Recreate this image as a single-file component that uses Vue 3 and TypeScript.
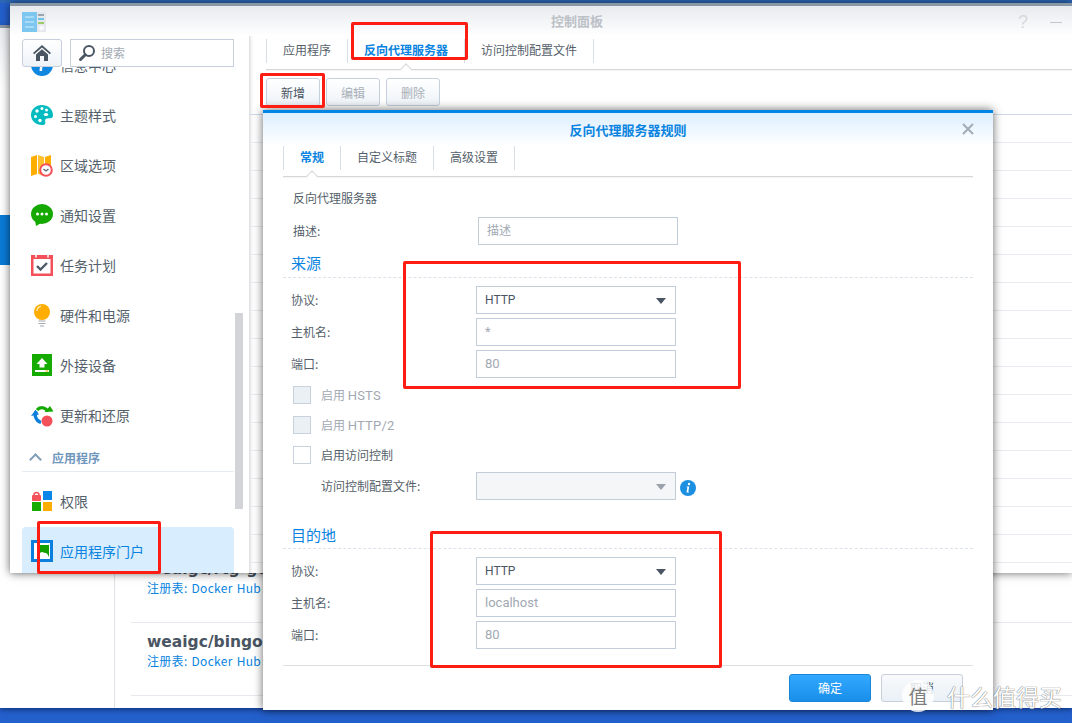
<script setup lang="ts">
const navItems = [
  { icon: 'info', label: '信息中心' },
  { icon: 'palette', label: '主题样式' },
  { icon: 'map', label: '区域选项' },
  { icon: 'chat', label: '通知设置' },
  { icon: 'calendar', label: '任务计划' },
  { icon: 'bulb', label: '硬件和电源' },
  { icon: 'external', label: '外接设备' },
  { icon: 'update', label: '更新和还原' },
]
const bgRows = Array.from({ length: 16 }, (_, i) => i)
const images = [
  { name: 'weaigc/rtg-gen', first: true },
  { name: 'weaigc/bingo', first: false },
]
</script>

<template>
  <div class="desktop">
    <!-- window behind -->
    <section class="win back">
      <div class="back-nav"><div class="back-sel"></div></div>
      <div class="back-list">
        <div v-for="im in images" :key="im.name" class="image-row">
          <div class="image-name">{{ im.name }}</div>
          <div class="image-reg">注册表: Docker Hub</div>
        </div>
        <div class="image-row short"></div>
      </div>
    </section>

    <!-- control panel -->
    <section class="win panel">
      <header class="titlebar">
        <svg class="app-icon" width="24" height="20" viewBox="0 0 24 20">
          <rect width="24" height="20" fill="#e4e8ec" />
          <rect width="15" height="20" fill="#7cc6f0" />
          <path d="M3 5h9M3 10h9M3 15h9" stroke="#d5eefb" stroke-width="1" />
          <path d="M16 3h6" stroke="#8a949e" stroke-width="1.6" />
          <path d="M16 7h6" stroke="#50b8e8" stroke-width="1.6" />
          <path d="M16 11h6" stroke="#8bc34a" stroke-width="1.6" />
          <circle cx="19.500" cy="16" r="2.500" fill="#f6f8fa" />
        </svg>
        <span class="win-title">控制面板</span>
        <span class="win-help">?</span>
        <span class="win-min"></span>
      </header>
      <div class="panel-body">
        <aside class="side">
          <div class="side-top">
            <button class="home">
              <svg width="18" height="16" viewBox="0 0 18 16">
                <path d="M9 0 0 8l1.200 1.200L9 2.400l7.800 6.800L18 8z" fill="#4a5563" />
                <path d="M3 9.500 9 4.300l6 5.200V16h-4v-5H7v5H3z" fill="#4a5563" />
              </svg>
            </button>
            <div class="search">
              <svg width="18" height="18" viewBox="0 0 18 18">
                <circle cx="11" cy="7" r="5" fill="none" stroke="#4a5563" stroke-width="2" />
                <path d="M7.300 10.700 2.500 15.500" stroke="#4a5563" stroke-width="3" stroke-linecap="round" />
              </svg>
              <span>搜索</span>
            </div>
          </div>
          <div class="side-scroll">
            <div class="side-inner">
              <div v-for="it in navItems" :key="it.label" class="nav">
                <svg class="nav-ic" width="24" height="24" viewBox="0 0 24 24">
                  <template v-if="it.icon === 'info'">
                    <circle cx="12" cy="12" r="11" fill="#0f86e0" />
                    <path d="M13 9h-2.500l-1 9h2.500z" fill="#fff" />
                  </template>
                  <template v-else-if="it.icon === 'palette'">
                    <path d="M12 2C5.500 2 1 6.500 1 12s4.500 10 11 10c3.200 0 3.800-1.500 3.200-3.500-.6-2.200 1-3.300 3-3.300h2.300c1.600 0 2.500-1 2.500-3C23 6 18 2 12 2z" fill="#04bcc0" />
                    <circle cx="7" cy="8" r="1.700" fill="#fff" />
                    <circle cx="12" cy="5.500" r="1.500" fill="#fff" />
                    <circle cx="16.500" cy="7" r="1.500" fill="#fff" />
                    <circle cx="5.500" cy="13.500" r="1.500" fill="#fff" />
                    <circle cx="10" cy="17.500" r="1.700" fill="#fff" />
                    <ellipse cx="16" cy="11.500" rx="2.200" ry="1.600" fill="#fff" />
                  </template>
                  <template v-else-if="it.icon === 'map'">
                    <path d="M1 4l6-2v19l-6 2z" fill="#ffae00" />
                    <path d="M8 2l6 2v19l-6-2z" fill="#ffc22e" />
                    <path d="M15 4l6-2v18l-6 3z" fill="#ffae00" />
                    <circle cx="16" cy="17" r="5.800" fill="#fff" stroke="#f4505a" stroke-width="2" />
                    <path d="M13.500 16l2.500 2 2.500-2" fill="none" stroke="#5a6570" stroke-width="1.300" />
                  </template>
                  <template v-else-if="it.icon === 'chat'">
                    <ellipse cx="12" cy="11" rx="11" ry="10" fill="#14a800" />
                    <path d="M5 17l1 6 7-4z" fill="#14a800" />
                    <circle cx="7.500" cy="11" r="1.500" fill="#fff" />
                    <circle cx="12" cy="11" r="1.500" fill="#fff" />
                    <circle cx="16.500" cy="11" r="1.500" fill="#fff" />
                  </template>
                  <template v-else-if="it.icon === 'calendar'">
                    <rect x="1" y="2" width="22" height="21" fill="#f4505a" />
                    <rect x="3.500" y="6" width="17" height="14.500" fill="#fff" />
                    <path d="M6 1.500v3M18 1.500v3" stroke="#fff" stroke-width="1.500" />
                    <path d="M7 13l3.500 3.500L17 10" fill="none" stroke="#4d5a68" stroke-width="2.400" />
                  </template>
                  <template v-else-if="it.icon === 'bulb'">
                    <circle cx="12" cy="9" r="8" fill="#ffae00" />
                    <path d="M11 3.200A5 5 0 0 0 7 8" fill="none" stroke="#ffe6a8" stroke-width="1.400" />
                    <path d="M8.500 18h7M8.500 20.500h7M10 23h4" stroke="#a2aab4" stroke-width="1.200" />
                  </template>
                  <template v-else-if="it.icon === 'external'">
                    <rect x="2" y="1" width="20" height="22" fill="#16ab00" />
                    <path d="M12 5l5.500 6H14.500v3.500h-5V11H6.500z" fill="#fff" />
                    <rect x="5" y="17" width="14" height="2" fill="#fff" />
                    <rect x="15.500" y="17.500" width="2.500" height="1" fill="#f3a600" />
                  </template>
                  <template v-else-if="it.icon === 'update'">
                    <path d="M7 7C10 3.500 15.500 4 18 8.500" fill="none" stroke="#14a800" stroke-width="3.200" />
                    <path d="M14.500 9l9-.5-3.500-5.500z" fill="#14a800" />
                    <path d="M6.500 8C3.500 12 6 18 11 19.500" fill="none" stroke="#0a7fdc" stroke-width="3.200" />
                    <path d="M1 13l8-1.500L5.500 7z" fill="#0a7fdc" />
                    <circle cx="17" cy="18" r="5.500" fill="#f4505a" />
                  </template>
                </svg>
                <span>{{ it.label }}</span>
              </div>
              <div class="group"><i class="chev"></i><span>应用程序</span></div>
              <div class="nav">
                <svg class="nav-ic" width="24" height="24" viewBox="0 0 24 24">
                  <path d="M4 6a2.500 2.500 0 0 1 5 0" fill="none" stroke="#f4505a" stroke-width="1.500" />
                  <rect x="2" y="6" width="9" height="6" rx="1" fill="#f4505a" />
                  <rect x="13" y="2" width="9" height="9" fill="#0a86e8" />
                  <rect x="2" y="13" width="9" height="9" fill="#16ab00" />
                  <rect x="13" y="13" width="9" height="9" fill="#ffae00" />
                </svg>
                <span>权限</span>
              </div>
              <div class="nav active">
                <svg class="nav-ic" width="24" height="24" viewBox="0 0 24 24">
                  <rect x="2.500" y="2.500" width="19" height="19" fill="#fff" stroke="#0a7fdc" stroke-width="3" />
                  <rect x="9" y="6" width="10" height="12" fill="#14a000" />
                  <path d="M6 18c0-3 3-3 3.500-3 .5-2 3.500-3 4.500-1 .6-.5 3.500-.4 5 4z" fill="#fff" />
                </svg>
                <span>应用程序门户</span>
              </div>
            </div>
            <div class="scrollbar"></div>
          </div>
        </aside>
        <main class="main">
          <nav class="tabs">
            <span class="tab">应用程序</span>
            <span class="tab on">反向代理服务器<i class="caret"></i></span>
            <span class="tab">访问控制配置文件</span>
          </nav>
          <div class="toolbar">
            <button class="btn">新增</button>
            <button class="btn off">编辑</button>
            <button class="btn off">删除</button>
          </div>
          <div class="grid">
            <div v-for="r in bgRows" :key="r" class="grid-row"></div>
          </div>
        </main>
      </div>
    </section>

    <!-- dialog -->
    <section class="win dialog">
      <header class="dlg-head">
        <span class="dlg-title">反向代理服务器规则</span>
        <svg class="dlg-close" width="14" height="14" viewBox="0 0 14 14">
          <path d="M2 2l10 10M12 2 2 12" stroke="#a4abb4" stroke-width="2" />
        </svg>
      </header>
      <div class="dlg-body">
        <nav class="tabs dlg-tabs">
          <span class="tab on">常规<i class="caret"></i></span>
          <span class="tab">自定义标题</span>
          <span class="tab">高级设置</span>
        </nav>

        <div class="plain">反向代理服务器</div>
        <div class="row desc">
          <label>描述:</label>
          <div class="field ph cjk">描述</div>
        </div>

        <h3 class="sec first">来源</h3>
        <div class="row">
          <label>协议:</label>
          <div class="field select">HTTP<i class="tri"></i></div>
        </div>
        <div class="row">
          <label>主机名:</label>
          <div class="field ph">*</div>
        </div>
        <div class="row">
          <label>端口:</label>
          <div class="field ph">80</div>
        </div>

        <div class="checks">
          <div class="check dis"><i class="box"></i><span>启用 <b>HSTS</b></span></div>
          <div class="check dis"><i class="box"></i><span>启用 <b>HTTP/2</b></span></div>
          <div class="check"><i class="box"></i><span>启用访问控制</span></div>
        </div>
        <div class="row acl">
          <label>访问控制配置文件:</label>
          <div class="field select dim"><i class="tri"></i></div>
          <svg class="info" width="16" height="16" viewBox="0 0 16 16">
            <circle cx="8" cy="8" r="8" fill="#1c8fe0" />
            <circle cx="9" cy="4" r="1.200" fill="#fff" />
            <path d="M9.200 6.500H6.800l-.2.800h.8l-.9 5.200h2.400l.2-.7h-.8z" fill="#fff" />
          </svg>
        </div>

        <h3 class="sec second">目的地</h3>
        <div class="row">
          <label>协议:</label>
          <div class="field select">HTTP<i class="tri"></i></div>
        </div>
        <div class="row">
          <label>主机名:</label>
          <div class="field ph">localhost</div>
        </div>
        <div class="row">
          <label>端口:</label>
          <div class="field ph">80</div>
        </div>

        <footer class="dlg-foot">
          <button class="pbtn primary">确定</button>
          <button class="pbtn">取消</button>
        </footer>
      </div>
    </section>

    <!-- annotations -->
    <i class="mark m-tab"></i>
    <i class="mark m-add"></i>
    <i class="mark m-src"></i>
    <i class="mark m-dst"></i>
    <i class="mark m-portal"></i>

    <!-- watermark -->
    <div class="wm">
      <span class="wm-badge">值</span>
      <span class="wm-text">什么值得买</span>
    </div>
  </div>
</template>

<style>
html, body { margin: 0; padding: 0; overflow: hidden; }
</style>

<style scoped>
* { box-sizing: border-box; }
.desktop {
  position: relative;
  width: 1072px;
  height: 723px;
  overflow: hidden;
  background: #2460cc;
  font-family: "Noto Sans CJK SC", "Liberation Sans", sans-serif;
  font-size: 12px;
  color: #4a5563;
}
.desktop::before {
  content: "";
  display: block;
  height: 3px;
  background: #2d68b8;
}
.win { position: absolute; background: #fff; }
button { font: inherit; margin: 0; padding: 0; }

/* back window */
.back {
  left: 0;
  top: 25px;
  width: 1072px;
  height: 683px;
  display: flex;
  border-top: 3px solid #8a97a5;
  background: linear-gradient(#e9ecf0, #fff 60px);
  box-shadow: 0 2px 5px rgba(0, 20, 70, .55);
}
.back-nav { width: 115px; flex: none; border-right: 1px solid #dfe2e6; padding-top: 187px; }
.back-sel { height: 50px; background: #0a7bd8; }
.back-list { flex: 1; padding: 522px 0 0 16px; background: #fff; }
.image-row { height: 73px; padding: 8px 0 0 16px; border-bottom: 1px solid #e6eaee; }
.image-row.short { height: 20px; border: 0; }
.image-name { font-size: 15.5px; line-height: 22px; font-weight: 700; font-family: "DejaVu Sans", "Noto Sans CJK SC", sans-serif; color: #4a5563; white-space: nowrap; }
.image-reg { font-size: 12px; line-height: 18px; margin-top: -1px; color: #0a84e0; letter-spacing: .3px; word-spacing: 1px; white-space: nowrap; }

/* control panel */
.panel {
  left: 10px;
  top: 3px;
  width: 1062px;
  height: 570px;
  border-top: 3px solid #8a97a5;
  display: flex;
  flex-direction: column;
  background: #fff;
  box-shadow: 0 0 9px rgba(0, 0, 0, .6);
}
.titlebar {
  height: 30px;
  flex: none;
  position: relative;
  background: linear-gradient(#e7eaee, #fff);
}
.app-icon { position: absolute; left: 12px; top: 6px; }
.win-title {
  position: absolute;
  left: 541px;
  top: 6px;
  font-size: 13px;
  line-height: 18px;
  font-weight: 700;
  color: #bcc1c7;
}
.win-help {
  position: absolute;
  left: 1008px;
  top: 6px;
  font-family: "Liberation Sans", sans-serif;
  font-size: 18px;
  line-height: 20px;
  color: #d6d9dc;
}
.win-min {
  position: absolute;
  left: 1040px;
  top: 16px;
  width: 12px;
  height: 1px;
  background: #c4c8cc;
}
.panel-body { flex: 1; min-height: 0; display: flex; }
.side {
  width: 240px;
  flex: none;
  display: flex;
  flex-direction: column;
  border-right: 1px solid #dfe1e4;
  box-shadow: 1px 0 3px rgba(0, 0, 0, .12);
  padding-top: 3px;
}
.side-top { display: flex; gap: 8px; height: 28px; padding-left: 12px; position: relative; z-index: 1; }
.home {
  width: 40px;
  height: 28px;
  border: 1px solid #c5d0dc;
  border-radius: 3px;
  background: linear-gradient(#fff, #eef3f8);
  display: flex;
  align-items: center;
  justify-content: center;
}
.search {
  width: 164px;
  height: 28px;
  border: 1px solid #c6d0dc;
  background: #fff;
  display: flex;
  align-items: center;
  gap: 5px;
  padding-left: 7px;
  color: #a2a9b2;
}
.search span { padding-bottom: 2px; }
.side-scroll { flex: 1; min-height: 0; overflow: hidden; position: relative; }
.side-inner { margin-top: -27px; padding: 0 15px 0 12px; }
.nav {
  height: 50px;
  display: flex;
  align-items: center;
  gap: 6px;
  padding-left: 8px;
  font-size: 14px;
  color: #555f6b;
  border-radius: 4px;
}
.nav-ic { flex: none; }
.nav.active {
  height: 46px;
  margin-top: 1px;
  background: #d8edfe;
  color: #0a84e0;
  padding-top: 2px;
  border-radius: 4px 4px 0 0;
}
.group {
  height: 32px;
  margin-bottom: 4px;
  padding: 4px 0 0 9px;
  display: flex;
  align-items: center;
  gap: 12px;
  border-bottom: 1px solid #e6ecf2;
  font-weight: 700;
  color: #6f97bd;
}
.chev {
  width: 9px;
  height: 9px;
  border-left: 2px solid #7f9db8;
  border-top: 2px solid #7f9db8;
  transform: translateY(2px) rotate(45deg);
}
.scrollbar {
  position: absolute;
  left: 225px;
  top: 246px;
  width: 8px;
  height: 196px;
  background: #d2d4d8;
}
.main { flex: 1; padding-top: 3px; position: relative; }
.tabs {
  display: flex;
  height: 31px;
  margin-left: 16px;
  border-bottom: 1px solid #d5d7da;
  box-shadow: 0 1px 1px rgba(0, 0, 0, .04);
  position: relative;
}
.tab {
  height: 24px;
  line-height: 22px;
  padding: 0 16px;
  border-right: 1px solid #d8dfe7;
  color: #555f6b;
  position: relative;
  white-space: nowrap;
}
.tab:first-child { border-left: 1px solid #d8dfe7; }
.tab.on { color: #0a84e0; font-weight: 700; }
.caret {
  position: absolute;
  left: 50%;
  top: 26px;
  width: 8px;
  height: 8px;
  margin-left: -4px;
  background: #fff;
  border-left: 1px solid #d5d7da;
  border-top: 1px solid #d5d7da;
  transform: rotate(45deg);
}
.toolbar { display: flex; gap: 6px; margin: 8px 0 0 16px; }
.btn {
  width: 54px;
  height: 28px;
  border: 1px solid #c5d0dc;
  border-radius: 3px;
  background: linear-gradient(#fff, #eef3f8);
  color: #4a5563;
  text-align: center;
}
.btn.off { color: #a8afb8; }
.grid { margin-top: 8px; border-top: 1px solid #d0d9e8; }
.grid-row { height: 28px; border-bottom: 1px solid #e8ebef; }

/* dialog */
.dialog {
  left: 263px;
  top: 110px;
  width: 730px;
  height: 600px;
  border-top: 3px solid #0086e5;
  box-shadow: 0 0 9px rgba(0, 0, 0, .6);
}
.dlg-head {
  height: 33px;
  position: relative;
  display: flex;
  align-items: center;
  justify-content: center;
  background: linear-gradient(#dcefff, #fff);
}
.dlg-title { font-size: 13px; font-weight: 700; color: #0a84e0; }
.dlg-close { position: absolute; right: 18px; top: 9px; }
.dlg-body { padding: 0 20px; }
.dlg-tabs { margin-left: 0; height: 31px; }
.plain { margin: 12px 0 0 10px; line-height: 18px; color: #555f6b; }
.row { display: flex; align-items: center; height: 28px; margin-top: 4px; }
.row label { width: 193px; flex: none; padding: 0 0 2px 8px; color: #555f6b; }
.row.desc { margin-top: 10px; }
.row.desc label { width: 195px; padding-left: 10px; }
.sec {
  margin: 4px 0 0;
  height: 29px;
  padding-left: 8px;
  font-size: 15px;
  line-height: 28px;
  font-weight: 400;
  color: #0a84e0;
  border-bottom: 1px dashed #dbe2e9;
}
.sec + .row { margin-top: 8px; }
.sec.second { margin-top: 20px; line-height: 30px; }
.field {
  width: 200px;
  height: 28px;
  border: 1px solid #c2cdda;
  line-height: 26px;
  padding-left: 8px;
  background: #fff;
  position: relative;
  font-family: "Roboto", "Noto Sans CJK SC", sans-serif;
  font-size: 12px;
  color: #4a5563;
}
.field.ph { color: #a2a9b2; font-size: 13px; }
.field.ph.cjk { font-size: 12px; }
.field.dim { background: #f4f6f8; }
.tri {
  position: absolute;
  right: 9px;
  top: 11px;
  border-left: 5px solid transparent;
  border-right: 5px solid transparent;
  border-top: 6px solid #4a5563;
}
.dim .tri { border-top-color: #9aa2ac; }
.checks { display: flex; flex-direction: column; gap: 12px; margin: 8px 0 0 10px; }
.check { height: 18px; display: flex; align-items: center; gap: 10px; color: #555f6b; }
.check span { padding-bottom: 2px; }
.check b { font: 13px "Roboto", sans-serif; letter-spacing: .2px; }
.check.dis { color: #a2a9b2; }
.box { width: 18px; height: 18px; flex: none; border: 1px solid #c8d2dd; background: #fff; }
.dis .box { background: #ebf0f5; }
.row.acl { margin-top: 8px; }
.row.acl label { width: 193px; padding-left: 38px; }
.info { margin: 4px 0 0 4px; }
.dlg-foot {
  display: flex;
  justify-content: flex-end;
  gap: 10px;
  margin-top: 16px;
  padding: 8px 10px 0 0;
  border-top: 1px solid #dcdee1;
}
.pbtn {
  width: 82px;
  height: 28px;
  padding-bottom: 1px;
  border: 1px solid #c5d0dc;
  border-radius: 3px;
  background: linear-gradient(#f8fafc, #eaf0f6);
  color: #4a5563;
}
.pbtn.primary {
  border-color: #1a86d8;
  background: linear-gradient(#33a8ff, #1a8fea);
  color: #fff;
}

/* annotations */
.mark {
  position: absolute;
  border: 3px solid #fe1d12;
  border-radius: 2px;
}
.m-tab { left: 351px; top: 22px; width: 117px; height: 38px; }
.m-add { left: 260px; top: 73px; width: 65px; height: 35px; }
.m-src { left: 403px; top: 261px; width: 338px; height: 128px; }
.m-dst { left: 430px; top: 531px; width: 292px; height: 137px; }
.m-portal { left: 37px; top: 521px; width: 124px; height: 53px; }

/* watermark */
.wm {
  position: absolute;
  left: 902px;
  top: 680px;
  display: flex;
  align-items: center;
  gap: 13px;
  color: #fff;
}
.wm-badge {
  width: 32px;
  height: 32px;
  border-radius: 50%;
  background: rgba(255, 255, 255, .82);
  color: #7d7d7d;
  font-size: 19px;
  line-height: 32px;
  text-align: center;
}
.wm-text {
  font-size: 23px;
  line-height: 30px;
  white-space: nowrap;
  text-shadow: 0 0 1px #666, 0 0 1px #888;
}
</style>
